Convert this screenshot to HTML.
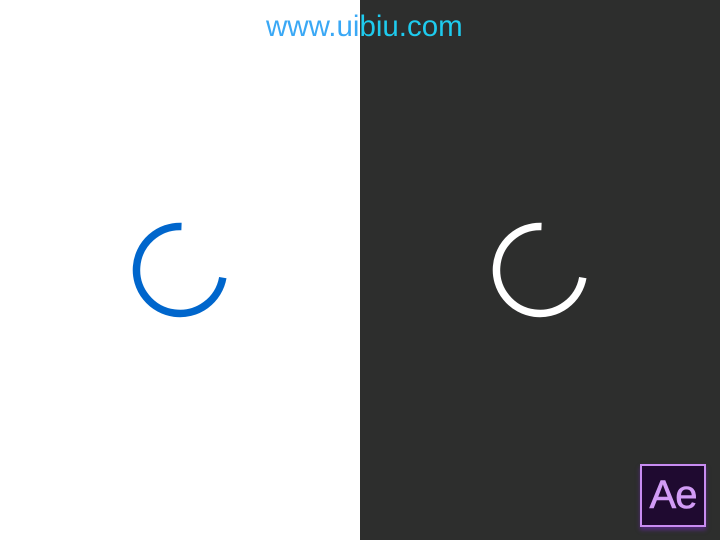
<!DOCTYPE html>
<html><head><style>
html,body{margin:0;padding:0}
body{width:720px;height:540px;position:relative;overflow:hidden;background:#fff;font-family:"Liberation Sans",sans-serif}
.dark{position:absolute;left:360px;top:0;width:360px;height:540px;background:#2d2e2d}
.t{position:absolute;left:266px;top:10px;font-size:29.5px;line-height:34px;white-space:nowrap;
background:linear-gradient(90deg,#3aa8f5 0,#3aa8f5 94px,#1ecbee 94px);-webkit-background-clip:text;background-clip:text;color:transparent}
.ae{position:absolute;left:640px;top:464px;width:62px;height:59px;border:2px solid #c88cf2;background:#1f0a30;box-shadow:0 3px 4px rgba(120,40,200,.5);
color:#d29cf6;font-size:40px;line-height:59px;text-align:center;letter-spacing:-1px;-webkit-text-stroke:0.6px #d29cf6}
svg{position:absolute;left:0;top:0}
</style></head><body>
<div class="dark"></div>
<div class="t">www.uibiu.com</div>
<svg width="720" height="540">
<path d="M181.5 226.5 A43.5 43.5 0 1 0 222.8 277.6" fill="none" stroke="#0066cc" stroke-width="7.5"/>
<path d="M541.5 226.5 A43.5 43.5 0 1 0 582.8 277.6" fill="none" stroke="#ffffff" stroke-width="7.5"/>
</svg>
<div class="ae">Ae</div>
</body></html>
